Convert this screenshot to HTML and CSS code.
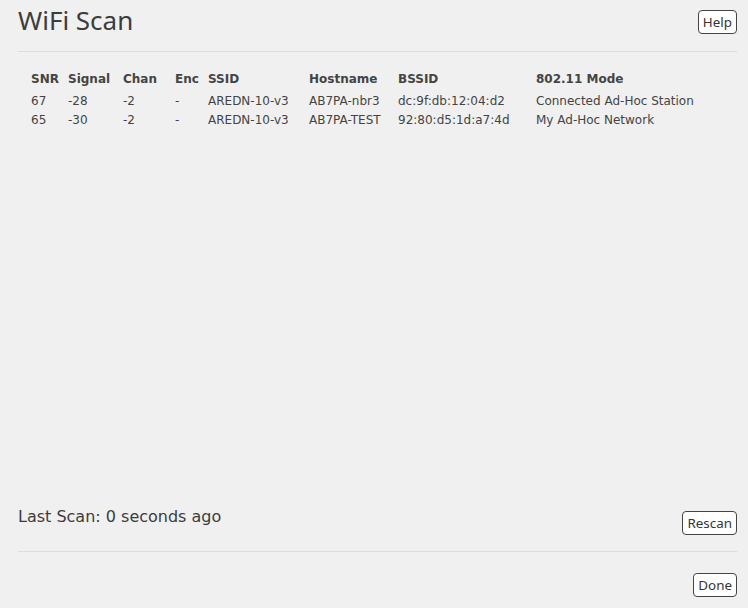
FILE: index.html
```html
<!DOCTYPE html>
<html>
<head>
<meta charset="utf-8">
<link rel="stylesheet" href="styles.css">
</head>
<body>
<div class="page">
  <header class="top">
    <h1 class="title">WiFi Scan</h1>
    <button class="btn">Help</button>
  </header>
  <hr class="rule">
  <main class="content">
    <table class="scan">
      <thead>
        <tr>
          <th class="c-snr">SNR</th>
          <th class="c-sig">Signal</th>
          <th class="c-chan">Chan</th>
          <th class="c-enc">Enc</th>
          <th class="c-ssid">SSID</th>
          <th class="c-host">Hostname</th>
          <th class="c-bssid">BSSID</th>
          <th class="c-mode">802.11 Mode</th>
        </tr>
      </thead>
      <tbody>
        <tr>
          <td>67</td><td>-28</td><td>-2</td><td>-</td><td>AREDN-10-v3</td><td>AB7PA-nbr3</td><td>dc:9f:db:12:04:d2</td><td>Connected Ad-Hoc Station</td>
        </tr>
        <tr>
          <td>65</td><td>-30</td><td>-2</td><td>-</td><td>AREDN-10-v3</td><td>AB7PA-TEST</td><td>92:80:d5:1d:a7:4d</td><td>My Ad-Hoc Network</td>
        </tr>
      </tbody>
    </table>
  </main>
  <section class="status">
    <div class="last">Last Scan: 0 seconds ago</div>
    <button class="btn">Rescan</button>
  </section>
  <hr class="rule">
  <footer class="foot">
    <button class="btn">Done</button>
  </footer>
</div>
</body>
</html>
```
FILE: styles.css
```css
html, body {
  margin: 0;
  padding: 0;
  background: #f0f0f0;
  color: #3c3c3c;
  font-family: "DejaVu Sans", sans-serif;
}
.page {
  height: 608px;
  box-sizing: border-box;
  padding: 0 11px 0 18px;
  display: flex;
  flex-direction: column;
}
.top {
  display: flex;
  justify-content: space-between;
  align-items: flex-start;
  height: 51px;
}
.title {
  margin: 2px 0 0 0;
  font-family: "Noto Sans", sans-serif;
  font-size: 26px;
  font-weight: normal;
  line-height: 36px;
  color: #3c3c3c;
}
.btn {
  font-family: "Noto Sans", sans-serif;
  font-size: 13.4px;
  color: #333;
  background: #fff;
  border: 1px solid #444;
  border-radius: 4px;
  padding: 0 4px;
  height: 24px;
  line-height: 20px;
  margin: 0;
}
.top .btn { margin-top: 10px; }
.rule {
  margin: 0;
  border: 0;
  border-top: 1px solid #dcdcdc;
  height: 0;
}
.content {
  flex: 1;
  padding: 17px 0 0 13px;
}
.scan {
  border-collapse: collapse;
  table-layout: fixed;
  font-size: 12px;
  color: #444;
}
.scan th {
  text-align: left;
  font-weight: bold;
  padding: 0 0 2px 0;
  height: 20px;
}
.scan td {
  padding: 0;
  height: 19px;
}
.c-snr { width: 37px; }
.c-sig { width: 55px; }
.c-chan { width: 52px; }
.c-enc { width: 33px; }
.c-ssid { width: 101px; }
.c-host { width: 89px; }
.c-bssid { width: 138px; }
.c-mode { width: 180px; }
.status {
  display: flex;
  justify-content: space-between;
  align-items: flex-start;
  height: 48px;
}
.last {
  font-size: 16px;
  line-height: 20px;
  margin-top: 4px;
}
.status .btn { margin-top: 8px; }
.foot {
  display: flex;
  justify-content: flex-end;
  height: 56px;
}
.foot .btn { margin-top: 21px; }
```
